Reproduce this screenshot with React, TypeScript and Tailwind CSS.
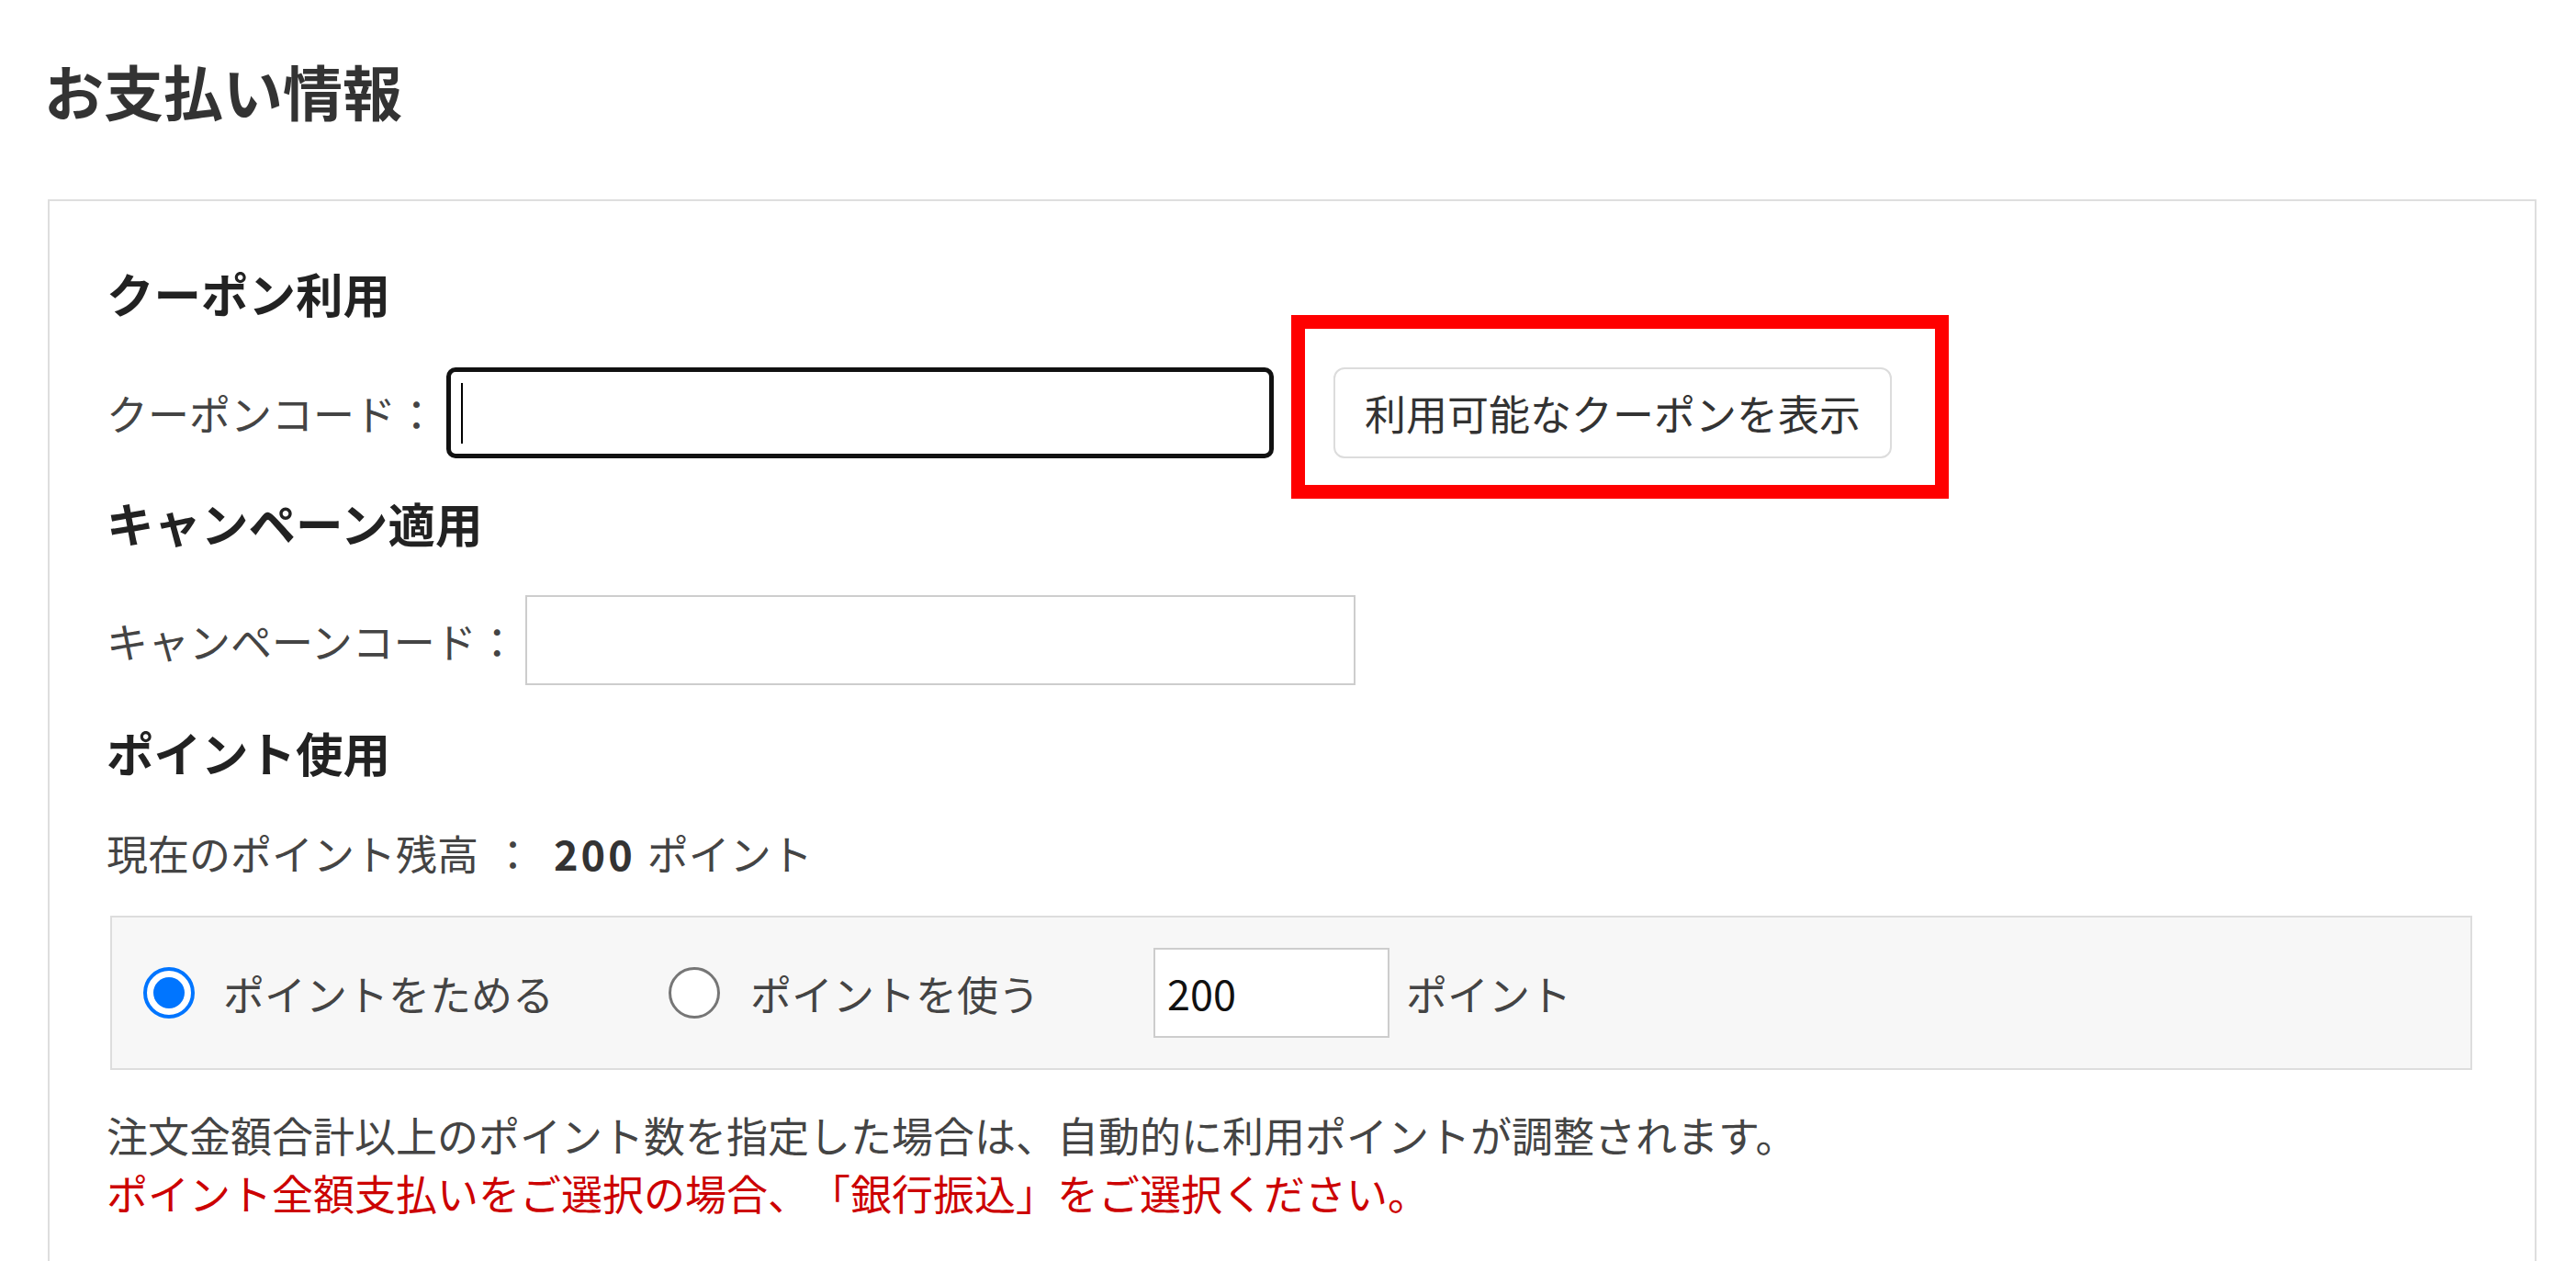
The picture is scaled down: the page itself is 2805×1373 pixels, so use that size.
export default function App() {
  return (
    <div className="min-h-screen bg-white pt-[50px] pl-[48px] pr-[43px] font-['Noto_Sans_CJK_JP',sans-serif] text-[#333] [text-spacing-trim:space-all]">
      <h1 className="text-[65px] leading-[96px] font-bold text-[#333]">お支払い情報</h1>
      <div className="mt-[71px] ml-[4px] border-2 border-[#dedede] pl-[62px] pr-[68px] pt-[62px] pb-[200px]">
        <h2 className="text-[51.5px] leading-[75px] font-bold text-[#222]">クーポン利用</h2>
        <div className="mt-[44px] flex items-center h-[99px]">
          <span className="text-[45px] leading-[63px] text-[#444]">クーポンコード：</span>
          <div className="ml-[10px] w-[901px] h-[99px] border-[5px] border-[#111] rounded-[10px] bg-white flex items-center pl-[11px]">
            <div className="w-[2px] h-[66px] bg-black" />
          </div>
          <div className="relative ml-[65px]">
            <button className="h-[99px] px-[32px] border-2 border-[#dcdcdc] rounded-[12px] bg-white text-[45px] leading-[63px] text-[#333]">
              利用可能なクーポンを表示
            </button>
            <div className="pointer-events-none absolute top-[-57px] left-[-46px] right-[-62px] bottom-[-44px] border-[15px] border-[#ff0000]" />
          </div>
        </div>
        <h2 className="mt-[32px] text-[51.5px] leading-[75px] font-bold text-[#222]">キャンペーン適用</h2>
        <div className="mt-[42px] flex items-center h-[98px]">
          <span className="text-[45px] leading-[63px] text-[#444]">キャンペーンコード：</span>
          <div className="ml-[8px] w-[904px] h-[98px] border-2 border-[#cdcdcd] bg-white" />
        </div>
        <h2 className="mt-[35px] text-[51.5px] leading-[75px] font-bold text-[#222]">ポイント使用</h2>
        <p className="mt-[41px] flex items-center text-[45px] leading-[63px] text-[#444]">
          <span>現在のポイント残高</span>
          <span className="ml-[15px]">：</span>
          <span className="ml-[22px] font-bold tracking-[3px] text-[#333]">200</span>
          <span className="ml-[13px]">ポイント</span>
        </p>
        <div className="mt-[37px] ml-[4px] h-[168px] border-2 border-[#dddddd] bg-[#f7f7f7] flex items-center pl-[34px]">
          <div className="w-[56px] h-[56px] rounded-full border-[4px] border-[#0075ff] bg-white flex items-center justify-center shrink-0">
            <div className="w-[34px] h-[34px] rounded-full bg-[#0075ff]" />
          </div>
          <span className="ml-[31px] text-[45px] leading-[63px] text-[#444]">ポイントをためる</span>
          <div className="ml-[125px] w-[56px] h-[56px] rounded-full border-[3px] border-[#767676] bg-white shrink-0" />
          <span className="ml-[33px] text-[45px] leading-[63px] text-[#444]">ポイントを使う</span>
          <div className="ml-[124px] w-[257px] h-[98px] border-2 border-[#cdcdcd] bg-white flex items-center pl-[13px] text-[45px] text-[#111]">
            200
          </div>
          <span className="ml-[18px] text-[45px] leading-[63px] text-[#444]">ポイント</span>
        </div>
        <p className="mt-[39px] text-[45px] leading-[63px] text-[#444]">
          注文金額合計以上のポイント数を指定した場合は、自動的に利用ポイントが調整されます。
        </p>
        <p className="text-[45px] leading-[63px] text-[#cc0000]">
          ポイント全額支払いをご選択の場合、「銀行振込」をご選択ください。
        </p>
      </div>
    </div>
  );
}
